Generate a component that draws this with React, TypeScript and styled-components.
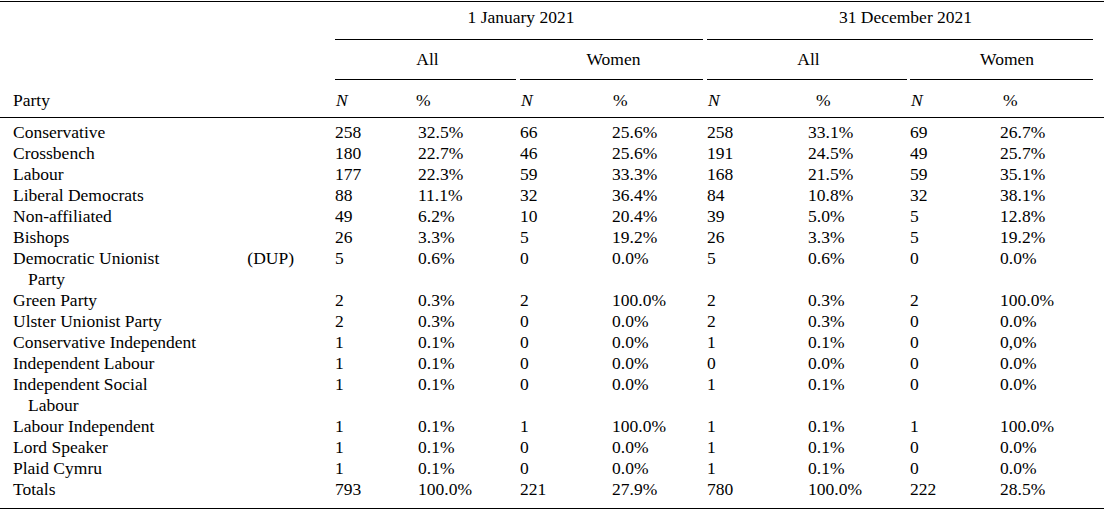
import React from "react";
import styled, { createGlobalStyle } from "styled-components";

const Global = createGlobalStyle`
  html, body { margin: 0; padding: 0; background: #fff; }
  body {
    font-family: "Liberation Serif", "Times New Roman", serif;
    color: #000;
  }
`;

const Table = styled.table`
  width: 1104px;
  margin-top: 1px;
  border-collapse: collapse;
  table-layout: fixed;
  border-top: 1px solid #000;
  border-bottom: 1px solid #000;
  font-size: 17.5px;
  line-height: 21px;
`;

const Col = styled.col<{ $w: number }>`
  width: ${(p) => p.$w}px;
`;

const HeadCell = styled.th`
  font-weight: normal;
  text-align: center;
  vertical-align: top;
  padding: 0;
`;

const HeadText = styled.div<{ $pt: number; $pb: number }>`
  padding-top: ${(p) => p.$pt}px;
  padding-bottom: ${(p) => p.$pb}px;
`;

const CMidRule = styled.div<{ $trim: number }>`
  height: 1px;
  background: #000;
  margin-right: ${(p) => p.$trim}px;
`;

const ColHead = styled.th<{ $indent?: number; $italic?: boolean; $pl?: number }>`
  font-weight: normal;
  text-align: left;
  vertical-align: top;
  padding: 10px 0 6px ${(p) => p.$pl ?? 0}px;
  text-indent: ${(p) => p.$indent ?? 0}px;
  font-style: ${(p) => (p.$italic ? "italic" : "normal")};
  border-bottom: 1px solid #000;
`;

const Body = styled.tbody`
  tr:first-child td { padding-top: 4px; }
  tr:last-child td { padding-bottom: 8px; }
`;

const Cell = styled.td`
  padding: 0;
  text-align: left;
  vertical-align: top;
  white-space: nowrap;
`;

const PartyCell = styled.td`
  padding: 0 0 0 13px;
  text-align: left;
  vertical-align: top;
`;

const LabelLine = styled.div<{ $spread?: boolean }>`
  display: flex;
  justify-content: ${(p) => (p.$spread ? "space-between" : "flex-start")};
  width: 281px;
  white-space: nowrap;
`;

const ContLine = styled.div`
  padding-left: 15px;
  white-space: nowrap;
`;

type Row = {
  party: string;
  tag?: string;
  cont?: string;
  v: string[];
};

const rows: Row[] = [
  { party: "Conservative", v: ["258", "32.5%", "66", "25.6%", "258", "33.1%", "69", "26.7%"] },
  { party: "Crossbench", v: ["180", "22.7%", "46", "25.6%", "191", "24.5%", "49", "25.7%"] },
  { party: "Labour", v: ["177", "22.3%", "59", "33.3%", "168", "21.5%", "59", "35.1%"] },
  { party: "Liberal Democrats", v: ["88", "11.1%", "32", "36.4%", "84", "10.8%", "32", "38.1%"] },
  { party: "Non-affiliated", v: ["49", "6.2%", "10", "20.4%", "39", "5.0%", "5", "12.8%"] },
  { party: "Bishops", v: ["26", "3.3%", "5", "19.2%", "26", "3.3%", "5", "19.2%"] },
  {
    party: "Democratic Unionist",
    tag: "(DUP)",
    cont: "Party",
    v: ["5", "0.6%", "0", "0.0%", "5", "0.6%", "0", "0.0%"],
  },
  { party: "Green Party", v: ["2", "0.3%", "2", "100.0%", "2", "0.3%", "2", "100.0%"] },
  { party: "Ulster Unionist Party", v: ["2", "0.3%", "0", "0.0%", "2", "0.3%", "0", "0.0%"] },
  { party: "Conservative Independent", v: ["1", "0.1%", "0", "0.0%", "1", "0.1%", "0", "0,0%"] },
  { party: "Independent Labour", v: ["1", "0.1%", "0", "0.0%", "0", "0.0%", "0", "0.0%"] },
  {
    party: "Independent Social",
    cont: "Labour",
    v: ["1", "0.1%", "0", "0.0%", "1", "0.1%", "0", "0.0%"],
  },
  { party: "Labour Independent", v: ["1", "0.1%", "1", "100.0%", "1", "0.1%", "1", "100.0%"] },
  { party: "Lord Speaker", v: ["1", "0.1%", "0", "0.0%", "1", "0.1%", "0", "0.0%"] },
  { party: "Plaid Cymru", v: ["1", "0.1%", "0", "0.0%", "1", "0.1%", "0", "0.0%"] },
  { party: "Totals", v: ["793", "100.0%", "221", "27.9%", "780", "100.0%", "222", "28.5%"] },
];

const widths = [335, 83, 102, 92, 95, 101, 102, 90, 104];

const groups = [
  { label: "1 January 2021", trim: 4 },
  { label: "31 December 2021", trim: 11 },
];

const subs = [
  { label: "All", trim: 4 },
  { label: "Women", trim: 4 },
  { label: "All", trim: 3 },
  { label: "Women", trim: 11 },
];

const pctIndent = [-2, 1, 8, 3];

export default function App() {
  return (
    <>
      <Global />
      <Table>
        <colgroup>
          {widths.map((w, i) => (
            <Col key={i} $w={w} />
          ))}
        </colgroup>
        <thead>
          <tr>
            <HeadCell />
            {groups.map((g, i) => (
              <HeadCell key={i} colSpan={4}>
                <HeadText $pt={5} $pb={11}>{g.label}</HeadText>
                <CMidRule $trim={g.trim} />
              </HeadCell>
            ))}
          </tr>
          <tr>
            <HeadCell />
            {subs.map((s, i) => (
              <HeadCell key={i} colSpan={2}>
                <HeadText $pt={9} $pb={9}>{s.label}</HeadText>
                <CMidRule $trim={s.trim} />
              </HeadCell>
            ))}
          </tr>
          <tr>
            <ColHead $pl={13}>Party</ColHead>
            {pctIndent.map((ind, i) => (
              <React.Fragment key={i}>
                <ColHead $italic $pl={1}>N</ColHead>
                <ColHead $indent={ind}>%</ColHead>
              </React.Fragment>
            ))}
          </tr>
        </thead>
        <Body>
          {rows.map((r, i) => (
            <tr key={i}>
              <PartyCell>
                <LabelLine $spread={!!r.tag}>
                  <span>{r.party}</span>
                  {r.tag && <span>{r.tag}</span>}
                </LabelLine>
                {r.cont && <ContLine>{r.cont}</ContLine>}
              </PartyCell>
              {r.v.map((c, j) => (
                <Cell key={j}>{c}</Cell>
              ))}
            </tr>
          ))}
        </Body>
      </Table>
    </>
  );
}
